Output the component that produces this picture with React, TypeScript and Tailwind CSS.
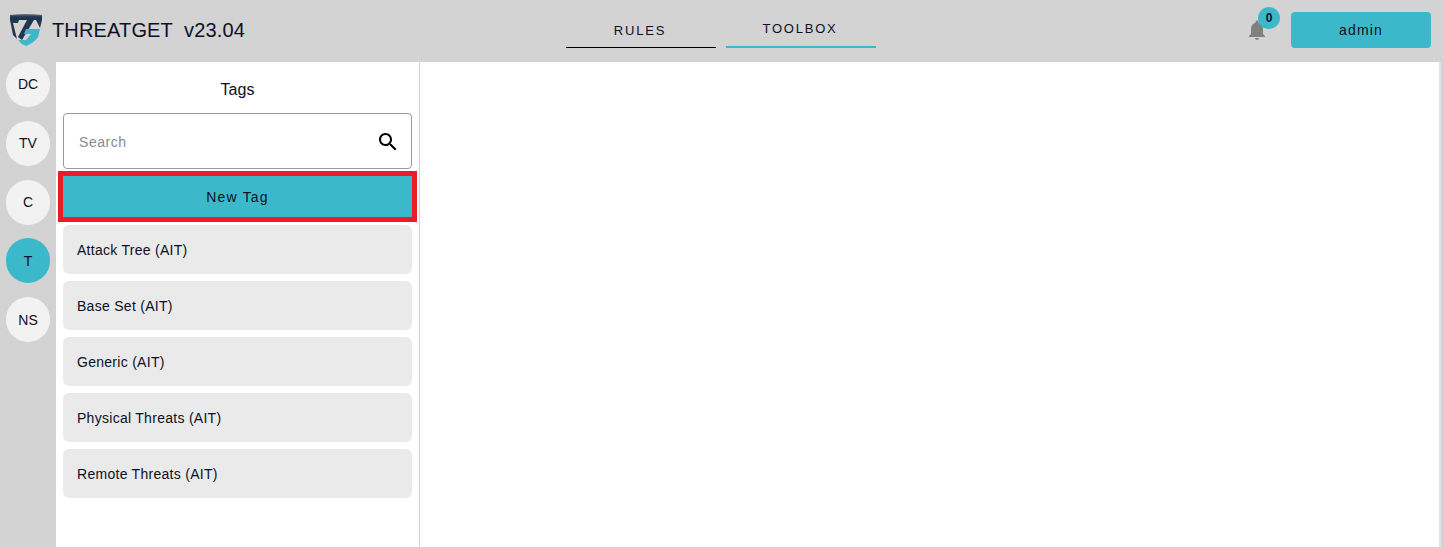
import React from "react";

const TEAL = "bg-[#3bb9ca]";

function Logo() {
  return (
    <svg width="32" height="32" viewBox="0 0 32 32" className="shrink-0">
      <defs>
        <linearGradient id="lg" x1="0" y1="0" x2="0" y2="1">
          <stop offset="0" stopColor="#6b7b88" />
          <stop offset="0.45" stopColor="#21394f" />
          <stop offset="1" stopColor="#1b3045" />
        </linearGradient>
      </defs>
      <path d="M0 1 Q16 -1 32 1 L32 6 L0 6 Z" fill="url(#lg)" />
      <path d="M0 6 L9 6 L8 9 L3 9 L7 25 L3 21 Z" fill="#21394f" />
      <path d="M17 6 L24 6 L12 26 L8 23 Z" fill="#1f3850" />
      <path d="M26 6 L32 6 L30 14 Z" fill="#21394f" />
      <path d="M16 15 L30 15 L28 23 Q24 29 16 32 Q11 30 8 26 L16 26 L21 20 L14 20 Z" fill="#3bb9ca" />
    </svg>
  );
}

function Circle({ label, active, low }: { label: string; active?: boolean; low?: boolean }) {
  return (
    <div
      className={`flex h-[45px] w-[44px] items-center justify-center rounded-full text-[14px] ${
        active ? TEAL : "bg-[#f2f2f2]"
      } ${low ? "pt-[2px]" : ""}`}
    >
      {label}
    </div>
  );
}

function Item({ label }: { label: string }) {
  return (
    <div className="flex h-[49px] items-center rounded-[6px] bg-[#eaeaea] px-[14px] pt-[2px] text-[14px] tracking-[0.28px]">
      {label}
    </div>
  );
}

export default function App() {
  return (
    <div
      className="flex h-[547px] w-[1443px] flex-col overflow-hidden bg-[#d3d3d3] text-[#0c1024]"
      style={{ fontFamily: '"Liberation Sans", Arial, sans-serif' }}
    >
      <header className="relative flex h-[62px] shrink-0 items-center pb-[2px] pl-[10px] pr-[12px]">
        <Logo />
        <div className="ml-[10px] text-[20px] tracking-[0.15px] whitespace-pre">THREATGET  v23.04</div>
        <nav className="ml-[321px] flex gap-[10px] self-start">
          <div className="mt-[12px] flex h-[36px] w-[150px] items-center justify-center border-b border-black pr-[2px] pt-[3px] text-[13px] tracking-[1.8px]">
            RULES
          </div>
          <div className="mt-[12px] flex h-[36px] w-[150px] items-center justify-center border-b-2 border-[#3bb9ca] pr-[2px] text-[13px] tracking-[1.8px]">
            TOOLBOX
          </div>
        </nav>
        <div className="relative ml-auto mr-[22px] flex h-[36px] w-[24px] items-center justify-center">
          <svg width="24" height="24" viewBox="0 0 24 24" fill="#808080">
            <path d="M12 22c1.1 0 2-.9 2-2h-4c0 1.1.9 2 2 2zm6-6v-5c0-3.07-1.63-5.64-4.5-6.32V4c0-.83-.67-1.5-1.5-1.5s-1.5.67-1.5 1.5v.68C7.64 5.36 6 7.92 6 11v5l-2 2v1h16v-1l-2-2z" />
          </svg>
          <span className={`absolute left-[13px] top-[-5px] flex h-[22px] w-[22px] items-center justify-center rounded-full ${TEAL} text-[12px] font-bold`}>
            0
          </span>
        </div>
        <button className={`flex h-[36px] w-[140px] items-center justify-center rounded-[4px] ${TEAL} text-[14px] tracking-[1.2px]`}>
          admin
        </button>
      </header>
      <div className="flex min-h-0 flex-1">
        <aside className="flex w-[56px] shrink-0 flex-col items-center gap-[13.8px]">
          <Circle label="DC" />
          <Circle label="TV" />
          <Circle label="C" />
          <Circle label="T" active low />
          <Circle label="NS" low />
        </aside>
        <section className="flex w-[364px] shrink-0 flex-col border-r border-[#d3d3d3] bg-white px-[7px]">
          <div className="flex h-[51px] items-center justify-center pt-[4px] text-[16px]">Tags</div>
          <div className="flex h-[56px] items-center justify-between rounded-[4px] border border-[#999] pl-[15px] pr-[11px] pt-[2px]">
            <span className="text-[14px] tracking-[0.55px] text-[#8a8a8a]">Search</span>
            <svg width="24" height="24" viewBox="0 0 24 24" fill="#000">
              <path d="M15.5 14h-.79l-.28-.27C15.41 12.59 16 11.11 16 9.5 16 5.91 13.09 3 9.5 3S3 5.91 3 9.5 5.91 16 9.5 16c1.61 0 3.09-.59 4.23-1.57l.27.28v.79l5 4.99L20.49 19l-4.99-5zm-6 0C7.01 14 5 11.99 5 9.5S7.01 5 9.5 5 14 7.01 14 9.5 11.99 14 9.5 14z" />
            </svg>
          </div>
          <div className="mx-[-5px] mt-[2px] border-[5px] border-[#ed1c24]">
            <div className={`flex h-[41px] items-center justify-center pt-[2px] ${TEAL} text-[14px] tracking-[1.2px]`}>
              New Tag
            </div>
          </div>
          <div className="mt-[3px] flex flex-col gap-[7px]">
            <Item label="Attack Tree (AIT)" />
            <Item label="Base Set (AIT)" />
            <Item label="Generic (AIT)" />
            <Item label="Physical Threats (AIT)" />
            <Item label="Remote Threats (AIT)" />
          </div>
        </section>
        <main className="w-[1021px] shrink-0 border-r-2 border-[#e2e2e8] bg-white" />
      </div>
    </div>
  );
}
